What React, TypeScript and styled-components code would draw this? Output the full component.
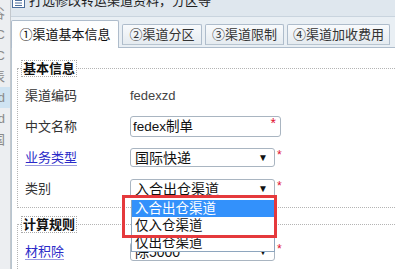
import React from 'react';
import styled, { createGlobalStyle } from 'styled-components';

const GlobalStyle = createGlobalStyle`
  html, body {
    margin: 0;
    padding: 0;
  }
  body {
    width: 395px;
    height: 269px;
    overflow: hidden;
    background: #fff;
    font-family: "Liberation Sans", "Noto Sans CJK SC", sans-serif;
    font-size: 13px;
    color: #333;
  }
`;

const Page = styled.div`
  display: flex;
  height: 269px;
  overflow: hidden;
`;

const SideStrip = styled.div`
  width: 10px;
  flex: none;
  background: #eceef1;
  border-right: 1px solid #c3c8cd;
  overflow: hidden;
  display: flex;
  flex-direction: column;
  padding-top: 3px;
`;

const SideItem = styled.div<{ $active?: boolean }>`
  height: 21px;
  line-height: 21px;
  display: flex;
  justify-content: flex-end;
  padding-right: 5px;
  white-space: nowrap;
  color: #8a8a8a;
  font-size: 13px;
  background: ${({ $active }) => ($active ? '#cfe3f2' : 'transparent')};
`;

const Window = styled.div`
  flex: 1;
  min-width: 0;
  display: flex;
  flex-direction: column;
  background: #e8eef3;
`;

const TitleBar = styled.div`
  height: 16px;
  flex: none;
  display: flex;
  align-items: flex-end;
  gap: 4px;
  padding-left: 1px;
  background: #dfe7ee;
  border-bottom: 1px solid #c9d4de;
  overflow: hidden;
`;

const TitleIcon = styled.svg`
  flex: none;
  margin-bottom: 8px;
`;

const TitleText = styled.div`
  font-size: 13px;
  line-height: 14px;
  color: #1e1e1e;
  white-space: nowrap;
  margin-bottom: 8px;
`;

const TabStrip = styled.div`
  height: 30px;
  flex: none;
  display: flex;
  align-items: flex-end;
  gap: 3px;
  border-bottom: 1px solid #aebccb;
  background: #e9eff4;
`;

const Tab = styled.div<{ $active?: boolean; $w: number }>`
  box-sizing: border-box;
  width: ${({ $w }) => $w}px;
  height: ${({ $active }) => ($active ? 28 : 21)}px;
  margin-bottom: ${({ $active }) => ($active ? '-1px' : '2px')};
  border: 1px solid #aebccb;
  border-bottom: ${({ $active }) => ($active ? 'none' : '1px solid #b7c4d0')};
  border-radius: 2px 2px 0 0;
  background: ${({ $active }) =>
    $active ? 'linear-gradient(#fdfefe, #ffffff)' : 'linear-gradient(#f8fafc, #e5ebf0)'};
  display: flex;
  align-items: center;
  justify-content: center;
  font-size: 13px;
  line-height: 16px;
  white-space: nowrap;
  color: ${({ $active }) => ($active ? '#111' : '#333')};
`;

const Content = styled.div`
  flex: 1;
  background: #fff;
  border-left: 1px solid #b8c5d0;
  padding-top: 12px;
  position: relative;
`;

const Fieldset = styled.fieldset<{ $top: number }>`
  margin: ${({ $top }) => $top}px 0 0 5px;
  padding: 3px 0 3px 7px;
  border: none;
  border-top: 1px dotted #b4b4b4;
  border-left: 1px dotted #b4b4b4;
  border-bottom: 1px dotted #b4b4b4;
  min-width: 0;
`;

const Legend = styled.legend`
  margin-left: -4px;
  padding: 0 1px;
  border: 1px dotted #aaa;
  font-size: 13px;
  line-height: 15px;
  font-weight: bold;
  color: #111;
`;

const Row = styled.div`
  display: grid;
  grid-template-columns: 105px auto;
  align-items: center;
  height: 31px;
`;

const Label = styled.div<{ $link?: boolean }>`
  font-size: 13px;
  line-height: 16px;
  color: ${({ $link }) => ($link ? '#2a2ac8' : '#333')};
  text-decoration: ${({ $link }) => ($link ? 'underline' : 'none')};
  text-decoration-color: #9a9ae0;
  text-underline-offset: 3px;
`;

const PlainValue = styled.div`
  font-size: 13px;
  color: #444;
`;

const FieldWrap = styled.div`
  position: relative;
  display: flex;
  align-items: flex-start;
`;

const TextBox = styled.div`
  box-sizing: border-box;
  width: 151px;
  height: 21px;
  border: 1px solid #a9b5c1;
  border-radius: 3px;
  display: flex;
  align-items: center;
  justify-content: space-between;
  padding: 0 4px 0 2px;
  font-size: 13.5px;
  line-height: 16px;
  color: #111;
`;

const SelectBox = styled.div`
  box-sizing: border-box;
  width: 145px;
  height: 19px;
  border: 1px solid #a9b5c1;
  border-radius: 3px;
  display: flex;
  align-items: center;
  justify-content: space-between;
  padding: 0 6px 0 4px;
  font-size: 14px;
  line-height: 16px;
  color: #111;
  background: #fff;
`;

const Arrow = styled.span`
  font-size: 10px;
  color: #111;
`;

const Req = styled.span<{ $inside?: boolean }>`
  color: #e0102f;
  font-size: ${({ $inside }) => ($inside ? '14px' : '12px')};
  line-height: 10px;
  align-self: flex-start;
  margin-top: ${({ $inside }) => ($inside ? '1px' : '2px')};
  margin-left: ${({ $inside }) => ($inside ? '0' : '2px')};
`;

const DropList = styled.div`
  position: absolute;
  left: 1px;
  top: 21px;
  width: 144px;
  box-sizing: border-box;
  border: 1px solid #8ea6be;
  border-top: none;
  background: #fff;
  z-index: 5;
`;

const Option = styled.div<{ $selected?: boolean }>`
  height: 17px;
  line-height: 17px;
  padding-left: 3px;
  font-size: 13.5px;
  white-space: nowrap;
  color: ${({ $selected }) => ($selected ? '#fff' : '#111')};
  background: ${({ $selected }) => ($selected ? '#3391fb' : '#fff')};
`;

const Highlight = styled.div`
  position: absolute;
  left: -8px;
  top: 16px;
  width: 155px;
  height: 43px;
  box-sizing: border-box;
  border: 3px solid #e5393c;
  z-index: 6;
`;

const sideChars = ['谷', 'C', 'C', '表', 'd', 'd', '国'];

const tabs = [
  { label: '①渠道基本信息', w: 108, active: true },
  { label: '②渠道分区', w: 80 },
  { label: '③渠道限制', w: 79 },
  { label: '④渠道加收费用', w: 103 },
];

const App: React.FC = () => {
  return (
    <>
      <GlobalStyle />
      <Page>
        <SideStrip>
          {sideChars.map((c, i) => (
            <SideItem key={i} $active={i === 4}>
              {c}
            </SideItem>
          ))}
        </SideStrip>

        <Window>
          <TitleBar>
            <TitleIcon width="13" height="13" viewBox="0 0 13 13">
              <rect x="0.5" y="0.5" width="12" height="12" fill="#fff" stroke="#4d6f9c" />
              <rect x="0.5" y="0.5" width="12" height="2.5" fill="#6f8fbb" />
              <line x1="3" y1="5.5" x2="10" y2="5.5" stroke="#4d6f9c" />
              <line x1="3" y1="8" x2="10" y2="8" stroke="#4d6f9c" />
              <line x1="3" y1="10.5" x2="10" y2="10.5" stroke="#4d6f9c" />
            </TitleIcon>
            <TitleText>打选修改转运渠道资料，分区等</TitleText>
          </TitleBar>

          <TabStrip>
            {tabs.map((t) => (
              <Tab key={t.label} $w={t.w} $active={t.active}>
                {t.label}
              </Tab>
            ))}
          </TabStrip>

          <Content>
            <Fieldset $top={0}>
              <Legend>基本信息</Legend>
              <Row>
                <Label>渠道编码</Label>
                <PlainValue>fedexzd</PlainValue>
              </Row>
              <Row>
                <Label>中文名称</Label>
                <FieldWrap>
                  <TextBox>
                    <span>fedex制单</span>
                    <Req $inside>*</Req>
                  </TextBox>
                </FieldWrap>
              </Row>
              <Row>
                <Label $link>业务类型</Label>
                <FieldWrap>
                  <SelectBox>
                    <span>国际快递</span>
                    <Arrow>▼</Arrow>
                  </SelectBox>
                  <Req>*</Req>
                </FieldWrap>
              </Row>
              <Row>
                <Label>类别</Label>
                <FieldWrap>
                  <SelectBox>
                    <span>入合出仓渠道</span>
                    <Arrow>▼</Arrow>
                  </SelectBox>
                  <Req>*</Req>
                  <DropList>
                    <Option $selected>入合出仓渠道</Option>
                    <Option>仅入仓渠道</Option>
                    <Option>仅出仓渠道</Option>
                  </DropList>
                  <Highlight />
                </FieldWrap>
              </Row>
            </Fieldset>

            <Fieldset $top={8}>
              <Legend>计算规则</Legend>
              <Row>
                <Label $link>材积除</Label>
                <FieldWrap>
                  <SelectBox>
                    <span>除5000</span>
                    <Arrow>▼</Arrow>
                  </SelectBox>
                  <Req>*</Req>
                </FieldWrap>
              </Row>
            </Fieldset>
          </Content>
        </Window>
      </Page>
    </>
  );
};

export default App;
